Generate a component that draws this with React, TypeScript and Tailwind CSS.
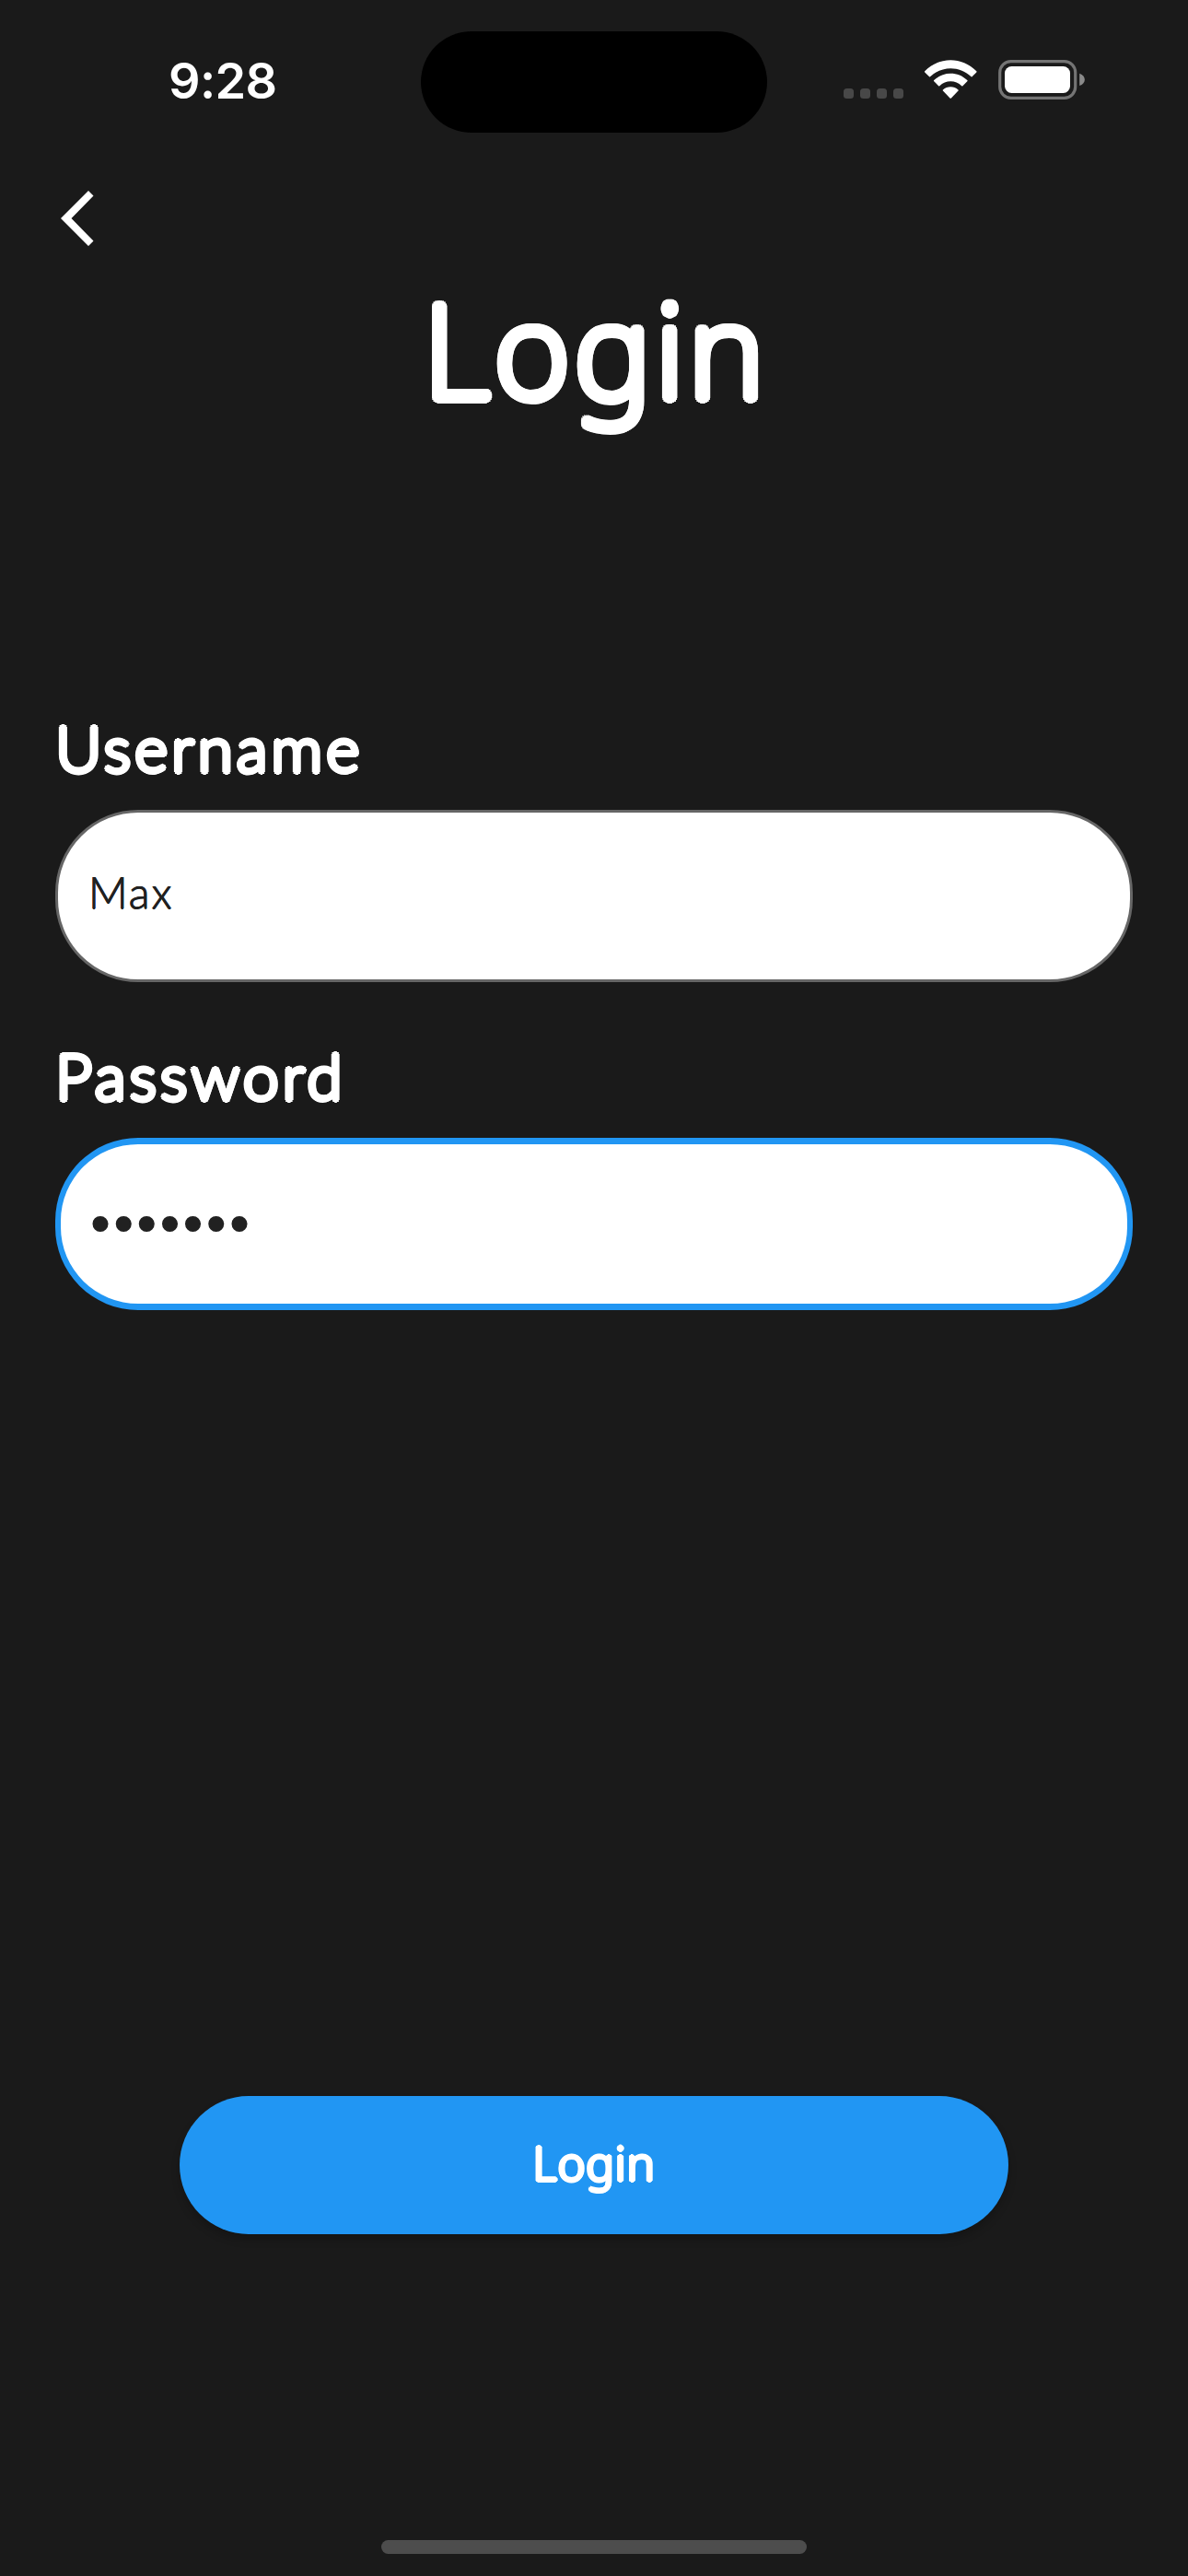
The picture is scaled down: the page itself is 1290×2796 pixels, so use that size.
import React from "react";

function StatusBar() {
  return (
    <header className="grid h-[178px] shrink-0 grid-cols-[457px_376px_457px] items-start">
      <time className="pt-[55px] pl-[183px] font-['Inter',sans-serif] text-[54px] leading-[66px] font-semibold tracking-[-0.6px]">
        9:28
      </time>
      <div className="mt-[34px] h-[110px] rounded-full bg-black" />
      <div className="flex pt-[65px] pl-[83px]">
        <div className="flex gap-[7px] pt-[31px]">
          {[0, 1, 2, 3].map((n) => (
            <span key={n} className="size-[11px] rounded-[3.5px] bg-[#484848]" />
          ))}
        </div>
        <svg className="ml-[22px] h-[43px] w-[58px]" viewBox="0 0 58 43" fill="white" aria-label="Wi-Fi">
          <path d="M1.200 12.200C17-3.900 41.500-3.900 57.300 12.200q.6.600 0 1.200l-4.800 4.800q-.6.500-1.200-.1C38.900 6.200 19.700 6.200 7.300 18.100q-.6.600-1.200.1L1.200 13.400q-.6-.6 0-1.200Z" />
          <path d="M11.200 22.100C21.200 12.300 37.300 12.300 47.300 22.100q.6.600 0 1.200l-4.900 4.900q-.6.500-1.200 0C34.700 21.500 23.800 21.500 17.300 28.200q-.6.500-1.200 0l-4.900-4.900q-.6-.6 0-1.200Z" />
          <path d="M20.900 32.500C25.500 28.200 33 28.200 37.500 32.500q.5.500 0 1.100l-7.600 7.800q-.7.700-1.400 0l-7.600-7.800q-.5-.6 0-1.100Z" />
        </svg>
        <svg className="ml-[23px] h-[43px] w-[95px]" viewBox="0 0 95 43" aria-label="Battery">
          <rect x="1.700" y="1.700" width="82" height="39.600" rx="12" fill="none" stroke="#747474" strokeWidth="3.200" />
          <rect x="7" y="7" width="71" height="29" rx="7.500" fill="white" />
          <path d="M88.200 14.800c7.500 2.800 7.500 10.400 0 13.300Z" fill="#8a8a8a" />
        </svg>
      </div>
    </header>
  );
}

function Field({ label, children, focused = false }: { label: string; children: React.ReactNode; focused?: boolean }) {
  return (
    <div className="h-[356px]">
      {/* Rings of solid shadow thicken the strokes and round their ends. */}
      <div className="h-[111px] font-['Lato',sans-serif] text-[69.500px] leading-[87px] font-light tracking-[3.900px] [text-shadow:2.8px_0_white,-2.8px_0_white,0_2.8px_white,0_-2.8px_white,2px_2px_white,-2px_2px_white,2px_-2px_white,-2px_-2px_white,1px_0_white,-1px_0_white,0_1px_white,0_-1px_white]">
        {label}
      </div>
      <div
        className={
          focused
            ? "flex h-[187px] items-center rounded-[90px] border-x-[6px] border-y-[7px] border-[#2196f3] bg-white pl-[32px] text-[#212121]"
            : "flex h-[187px] items-center rounded-[90px] border-[3px] border-[#666666] bg-white pl-[33px] text-[#212121]"
        }
      >
        {children}
      </div>
    </div>
  );
}

export default function App() {
  return (
    <main className="flex h-[2796px] w-[1290px] flex-col overflow-hidden bg-[#1a1a1a] text-white">
      <StatusBar />
      <nav className="flex h-[110px] shrink-0 pt-[29px] pl-[66px]">
        <svg className="h-[60px] w-[36px]" viewBox="0 0 36 60" fill="white" aria-label="Back">
          <path d="M30 0 35.500 5.400 11.500 30 35.500 54.600 30 60 0 30Z" />
        </svg>
      </nav>
      <h1 className="flex h-[480px] shrink-0 justify-center pl-[5px] font-['Noto_Sans',sans-serif] text-[140px] leading-[179px] font-extralight tracking-[5.500px] [text-shadow:5.5px_0_white,-5.5px_0_white,0_5.5px_white,0_-5.5px_white,3.9px_3.9px_white,-3.9px_3.9px_white,3.9px_-3.9px_white,-3.9px_-3.9px_white,5.1px_2.1px_white,-5.1px_2.1px_white,5.1px_-2.1px_white,-5.1px_-2.1px_white,2.1px_5.1px_white,-2.1px_5.1px_white,2.1px_-5.1px_white,-2.1px_-5.1px_white,2.5px_0_white,-2.5px_0_white,0_2.5px_white,0_-2.5px_white]">
        Login
      </h1>
      <form className="flex h-[1507px] shrink-0 flex-col px-[60px]">
        <Field label="Username">
          <span className="mb-[9px] font-['Lato',sans-serif] text-[47px] font-light tracking-[2px] [text-shadow:0.5px_0_#212121,-0.5px_0_#212121,0_0.5px_#212121]">Max</span>
        </Field>
        <Field label="Password" focused>
          <span className="mb-[2px] font-['Liberation_Sans',sans-serif] text-[63px] leading-none tracking-[3.100px]">•••••••</span>
        </Field>
      </form>
      <div className="flex h-[482px] shrink-0 justify-center">
        <button type="button" className="h-[150px] w-[900px] rounded-full bg-[#2196f3] pb-[5px] font-['Noto_Sans',sans-serif] text-[51px] font-light tracking-[0.8px] shadow-[0_6px_10px_rgba(0,0,0,0.2)] [text-shadow:2px_0_white,-2px_0_white,0_2px_white,0_-2px_white,1.4px_1.4px_white,-1.4px_1.4px_white,1.4px_-1.4px_white,-1.4px_-1.4px_white]">
          Login
        </button>
      </div>
      <div className="mx-auto h-[15px] w-[462px] shrink-0 rounded-full bg-[#4d4d4d]" />
    </main>
  );
}
